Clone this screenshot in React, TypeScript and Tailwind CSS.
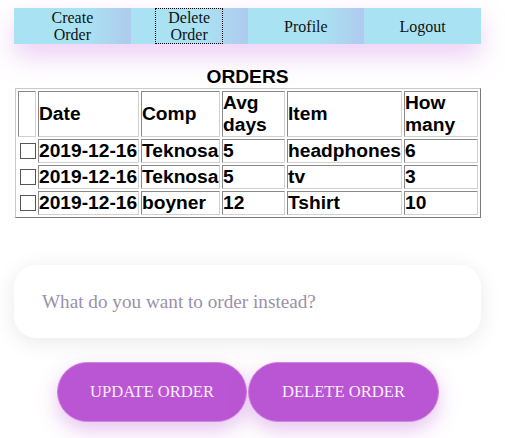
import React from 'react';

const navItems = [
  { label: ['Create', 'Order'], focused: false, shade: true },
  { label: ['Delete', 'Order'], focused: true, shade: true },
  { label: ['Profile'], focused: false, shade: true },
  { label: ['Logout'], focused: false, shade: false },
];

const orders = [
  { date: '2019-12-16', comp: 'Teknosa', avg: '5', item: 'headphones', qty: '6' },
  { date: '2019-12-16', comp: 'Teknosa', avg: '5', item: 'tv', qty: '3' },
  { date: '2019-12-16', comp: 'boyner', avg: '12', item: 'Tshirt', qty: '10' },
];

const cell =
  'border border-t-[#8a8a8a] border-l-[#8a8a8a] border-b-[#d0d0d0] border-r-[#d0d0d0] p-0 align-middle text-left';

export default function App() {
  return (
    <div className="min-h-[438px] w-[505px] bg-white font-['Liberation_Sans',Arial,sans-serif] text-black">
      <div className="ml-[14px] w-[467px] pt-[8px]">
        <nav className="flex h-[36px] shadow-[0_12px_26px_rgba(210,140,228,0.42)]">
          {navItems.map((n, i) => (
            <div
              key={i}
              className={
                'flex flex-1 items-center justify-center font-["Liberation_Serif","Times_New_Roman",serif] text-[16px] leading-[17px] text-[#111] ' +
                (n.shade
                  ? 'bg-linear-to-r from-[#a9e3f3] from-60% to-[#afcaee]'
                  : 'bg-[#a9e3f3]')
              }
            >
              <button
                className={
                  'flex h-full flex-col items-center justify-center px-[12px] ' +
                  (n.focused ? 'border border-dotted border-black' : 'border border-transparent')
                }
              >
                {n.label.map((l) => (
                  <span key={l}>{l}</span>
                ))}
              </button>
            </div>
          ))}
        </nav>

        <h2 className="mt-[22px] text-center text-[19.2px] font-bold leading-[22px]">ORDERS</h2>

        <table className="ml-px w-[466px] table-fixed border-separate border-spacing-[2px] border border-t-[#c8c8c8] border-l-[#c8c8c8] border-b-[#7a7a7a] border-r-[#7a7a7a] text-[19.2px] font-bold leading-[22px]">
          <colgroup>
            <col className="w-[18px]" />
            <col className="w-[101px]" />
            <col className="w-[79px]" />
            <col className="w-[63px]" />
            <col className="w-[115px]" />
            <col />
          </colgroup>
          <thead>
            <tr>
              <th className={cell}></th>
              <th className={cell + ' font-bold'}>Date</th>
              <th className={cell + ' font-bold'}>Comp</th>
              <th className={cell + ' font-bold'}>
                Avg
                <br />
                days
              </th>
              <th className={cell + ' font-bold'}>Item</th>
              <th className={cell + ' font-bold'}>
                How
                <br />
                many
              </th>
            </tr>
          </thead>
          <tbody>
            {orders.map((o, i) => (
              <tr key={i}>
                <td className={cell + ' !border-transparent'}>
                  <span className="ml-[1px] block h-[16px] w-[16px] border border-[#555] bg-white" />
                </td>
                <td className={cell + ' whitespace-nowrap'}>{o.date}</td>
                <td className={cell + ' whitespace-nowrap'}>{o.comp}</td>
                <td className={cell}>{o.avg}</td>
                <td className={cell + ' whitespace-nowrap'}>{o.item}</td>
                <td className={cell}>{o.qty}</td>
              </tr>
            ))}
          </tbody>
        </table>

        <div className="mt-[47px] flex h-[73px] items-center rounded-[22px] bg-white pl-[28px] pt-[2px] shadow-[0_4px_22px_rgba(0,0,0,0.09)]">
          <input
            className="w-full bg-transparent font-['Liberation_Serif','Times_New_Roman',serif] text-[19.2px] text-[#333] outline-none placeholder:text-[#9c8fab]"
            placeholder="What do you want to order instead?"
          />
        </div>

        <div className="mt-[24px] flex justify-center gap-[1px] pl-[1px]">
          <button className="h-[60px] w-[190px] rounded-full border border-[#cf86df] bg-[#ba55d3] font-['Liberation_Serif','Times_New_Roman',serif] text-[16.6px] text-[#fbeefc] shadow-[0_8px_20px_rgba(186,85,211,0.35)]">
            UPDATE ORDER
          </button>
          <button className="h-[60px] w-[191px] rounded-full border border-[#cf86df] bg-[#ba55d3] font-['Liberation_Serif','Times_New_Roman',serif] text-[16.6px] text-[#fbeefc] shadow-[0_8px_20px_rgba(186,85,211,0.35)]">
            DELETE ORDER
          </button>
        </div>
      </div>
    </div>
  );
}
